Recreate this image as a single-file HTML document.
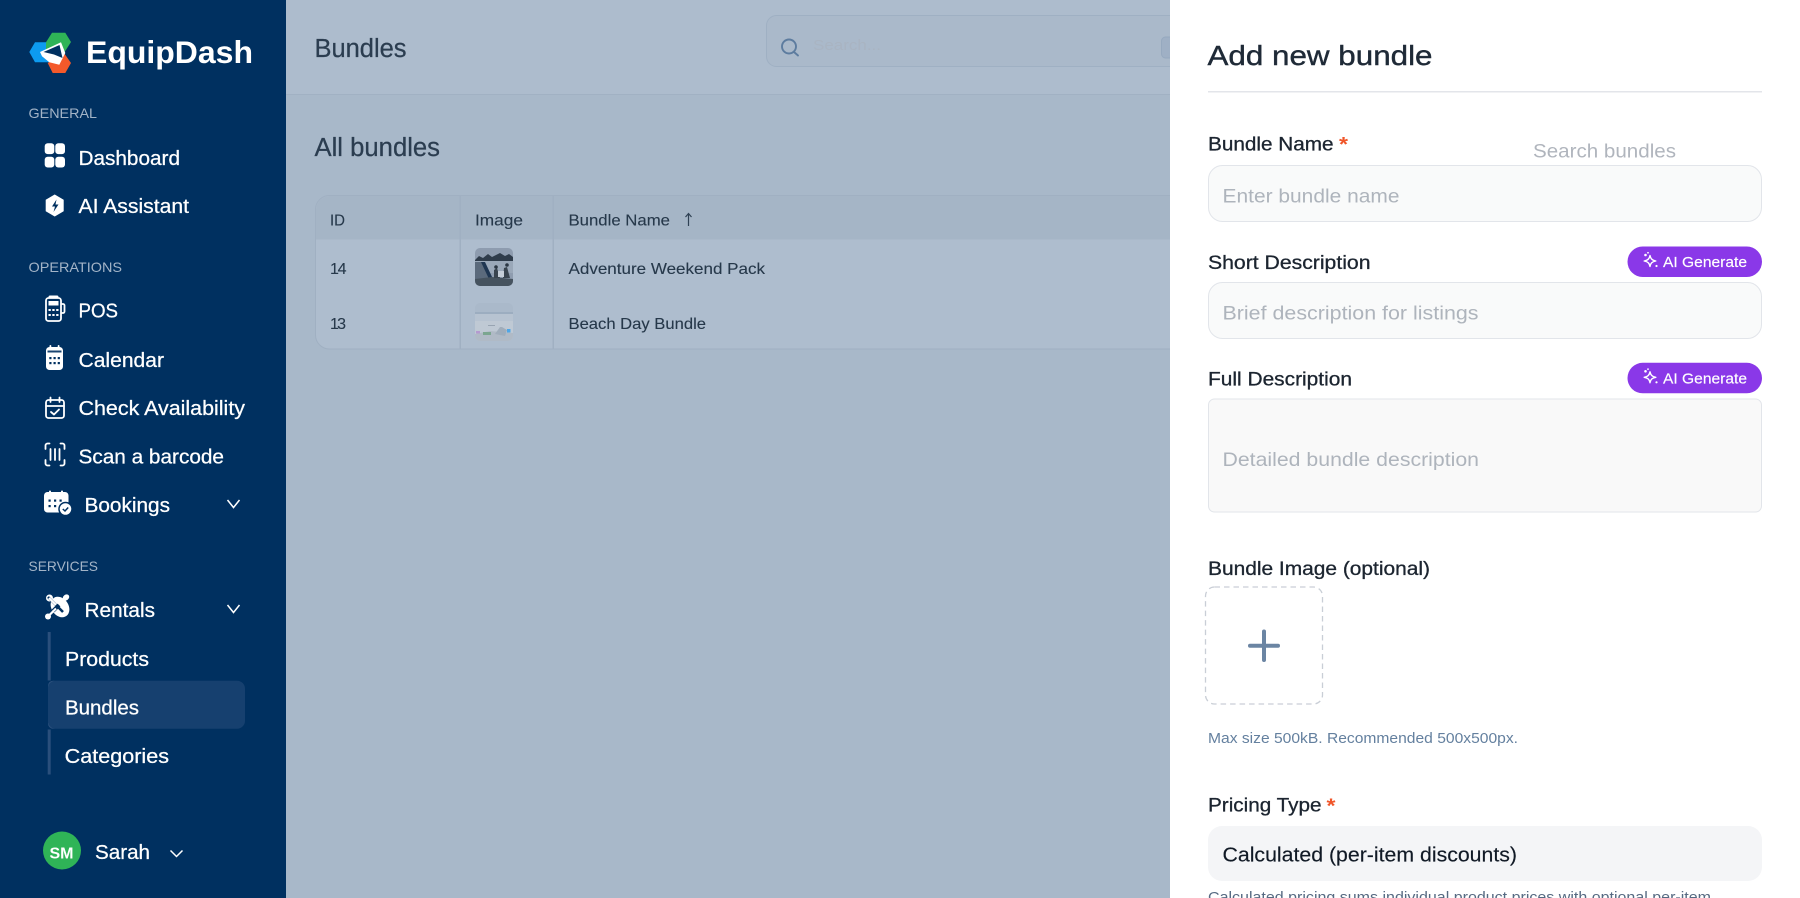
<!DOCTYPE html>
<html lang="en">
<head>
<meta charset="utf-8">
<title>EquipDash - Bundles</title>
<style>
html,body{margin:0;padding:0;width:1800px;height:898px;overflow:hidden;background:#fff}
svg{display:block}
text{font-family:"Liberation Sans",sans-serif;white-space:pre}
.nav{font-size:20px;fill:#fff;stroke:#fff;stroke-width:.25}
.sec{font-size:14px;fill:#a3b4c7}
.tb{font-size:16px;fill:#26384a;stroke:#26384a;stroke-width:.12}
.lab{font-size:19px;fill:#1c2530;stroke:#1c2530;stroke-width:.3}
.ph{font-size:19.5px;fill:#aeb4bc}
.ai{font-size:14.5px;fill:#fff;stroke:#fff;stroke-width:.15}
.req{font-size:20px;fill:#f0562a;font-weight:700}
</style>
</head>
<body>
<svg xmlns="http://www.w3.org/2000/svg" width="1800" height="898" viewBox="0 0 1800 898">
<defs>
<clipPath id="t1"><rect x="475" y="248" width="38" height="38" rx="5"/></clipPath>
<clipPath id="t2"><rect x="475" y="303" width="38" height="38" rx="5"/></clipPath>
</defs>

<!-- Main (dimmed) -->
<rect x="286" y="0" width="884" height="898" fill="#a8b8c9"/>
<rect x="286" y="0" width="884" height="94" fill="#adbccd"/>
<rect x="286" y="94" width="884" height="1" fill="#a1b1c3"/>
<text x="314.500" y="57" font-size="25.500" fill="#2b3d50" stroke="#2b3d50" stroke-width=".25" textLength="92" lengthAdjust="spacingAndGlyphs">Bundles</text>
<rect x="766.500" y="15.500" width="440" height="51" rx="10" fill="#aab9ca" stroke="#9fb0c3"/>
<circle cx="789" cy="46.500" r="7" fill="none" stroke="#5d7c9f" stroke-width="1.900"/>
<path d="M794 52L798 55.500" stroke="#5d7c9f" stroke-width="1.900" stroke-linecap="round"/>
<text x="813" y="50" font-size="15" fill="#a9b4c2" textLength="68" lengthAdjust="spacingAndGlyphs">Search...</text>
<rect x="1161.500" y="37" width="30" height="21" rx="4" fill="#9fb0c5" stroke="#96a9bf"/>
<text x="314.500" y="156" font-size="25.500" fill="#2b3d50" stroke="#2b3d50" stroke-width=".25" textLength="125.500" lengthAdjust="spacingAndGlyphs">All bundles</text>

<!-- Table -->
<rect x="315.500" y="195.500" width="900" height="153.500" rx="14" fill="#aebdce" stroke="#a0b0c2"/>
<path d="M316 239.500V209.500A14 14 0 0 1 330 196H1215V239.500Z" fill="#a5b5c6"/>
<rect x="459.500" y="196" width="1.500" height="153" fill="#a0b0c2"/>
<rect x="552.500" y="196" width="1.500" height="153" fill="#a0b0c2"/>
<text class="tb" x="330" y="225.700" textLength="15" lengthAdjust="spacingAndGlyphs">ID</text>
<text class="tb" x="475" y="225.700" textLength="48" lengthAdjust="spacingAndGlyphs">Image</text>
<text class="tb" x="568.500" y="225.700" textLength="101.500" lengthAdjust="spacingAndGlyphs">Bundle Name</text>
<path d="M688.500 226V214M685.500 217L688.500 213.500L691.500 217" fill="none" stroke="#2f4154" stroke-width="1.200"/>
<text class="tb" x="330" y="273.800" font-size="17" textLength="16.500" lengthAdjust="spacing">14</text>
<text class="tb" x="568.500" y="273.800" textLength="196.500" lengthAdjust="spacingAndGlyphs">Adventure Weekend Pack</text>
<text class="tb" x="330" y="328.800" font-size="17" textLength="16" lengthAdjust="spacing">13</text>
<text class="tb" x="568.500" y="328.800" textLength="137.500" lengthAdjust="spacingAndGlyphs">Beach Day Bundle</text>
<g clip-path="url(#t1)">
<rect x="475" y="248" width="38" height="38" fill="#8e9caf"/>
<rect x="475" y="259" width="38" height="14" fill="#9aa8b9"/>
<path d="M475 260L479 256L483 258L488 254L492 257L496 255L500 253L505 256L509 254L513 257V261H475Z" fill="#2f3c4b"/>
<path d="M475 262H482L491 281H475Z" fill="#5b6a7c"/>
<path d="M481 262L485 262L493 279L489 279Z" fill="#1f3652"/>
<path d="M475 279L492 277L513 279V286H475Z" fill="#46535f"/>
<path d="M494 270l3-2 3 10h-6zM504 268l3-1 3 11h-7z" fill="#39444f"/>
<path d="M498 271h6v6h-6z" fill="#c5ced8"/>
<circle cx="496" cy="267" r="1.800" fill="#2b3744"/><circle cx="507" cy="265" r="1.800" fill="#2b3744"/>
</g>
<g clip-path="url(#t2)">
<rect x="475" y="303" width="38" height="38" fill="#aab9ca"/>
<rect x="475" y="312" width="38" height="2" fill="#9cadc0"/>
<rect x="475" y="314" width="38" height="7" fill="#b7c3d1"/>
<rect x="475" y="321" width="38" height="20" fill="#bfc9d4"/>
<path d="M475 334L490 331L513 333V341H475Z" fill="#b0bac6"/>
<path d="M495 334l5-7 2 0 5 3-2 6z" fill="#a0adbb"/>
<rect x="483" y="332" width="8" height="3" fill="#7ba690"/>
<rect x="476" y="331" width="4" height="2.500" fill="#b49ad0"/>
<rect x="507" y="329" width="3.500" height="3.500" fill="#4fa6e6"/>
<rect x="488" y="325" width="7" height="1" fill="#98a4b2"/>
</g>

<!-- Sidebar -->
<rect x="0" y="0" width="286" height="898" fill="#003060"/>
<polygon points="29.300,52 35,42.300 62,42.300 62,62.300 35,62.300" fill="#0d9bf0"/>
<polygon points="52,32.700 65.300,32.700 71,42 64,53 46,50 46,42.300" fill="#2fb457"/>
<polygon points="64,53 71,63 65.300,73 52.700,73 47.700,63" fill="#f4592a"/>
<polygon points="40,52 61,42.300 65.300,53 59.300,64.700 49.300,62.300 42,56.300" fill="#fff"/>
<polygon points="43.500,52 59.500,45 62.500,58 54,54.500" fill="#003060"/>
<text x="86" y="63" font-size="31.500" font-weight="700" fill="#fff" textLength="167" lengthAdjust="spacingAndGlyphs">EquipDash</text>

<text class="sec" x="28.500" y="118" textLength="68.500" lengthAdjust="spacingAndGlyphs">GENERAL</text>
<g fill="#fff"><rect x="44.700" y="143.300" width="9.600" height="10.800" rx="3"/><rect x="55.300" y="143.300" width="9.700" height="10.800" rx="3"/><rect x="44.700" y="156.700" width="9.600" height="10.800" rx="3"/><rect x="55.300" y="156.700" width="9.700" height="10.800" rx="3"/></g>
<text class="nav" x="78.500" y="165" textLength="101.500" lengthAdjust="spacingAndGlyphs">Dashboard</text>
<polygon points="54.700,195 63.200,200 63.200,211 54.700,216 46.200,211 46.200,200" fill="#fff" stroke="#fff" stroke-width="1" stroke-linejoin="round"/>
<path d="M56.500 199.500L52 206.500H55L53.500 212L58.500 204.500H55.500Z" fill="#003060"/>
<text class="nav" x="78.500" y="213" textLength="110.500" lengthAdjust="spacingAndGlyphs">AI Assistant</text>

<text class="sec" x="28.500" y="272" textLength="93.500" lengthAdjust="spacingAndGlyphs">OPERATIONS</text>
<g fill="none" stroke="#fff" stroke-width="1.800" stroke-linejoin="round">
<rect x="46" y="298" width="15" height="23" rx="2.500"/>
<path d="M61 304h2a1.500 1.500 0 0 1 1.500 1.500v6a1.500 1.500 0 0 1-1.500 1.500h-2"/>
</g>
<rect x="48.500" y="295.500" width="10" height="3" rx="1.500" fill="#fff"/>
<rect x="48.500" y="301" width="10" height="4.500" fill="#fff"/>
<g fill="#fff"><rect x="48.500" y="309" width="2.300" height="2"/><rect x="52.300" y="309" width="2.300" height="2"/><rect x="56.200" y="309" width="2.300" height="2"/><rect x="48.500" y="314" width="2.300" height="2"/><rect x="52.300" y="314" width="2.300" height="2"/><rect x="56.200" y="314" width="2.300" height="2"/></g>
<text class="nav" x="78.500" y="317.700" textLength="39.500" lengthAdjust="spacingAndGlyphs">POS</text>

<rect x="46" y="347" width="17" height="23" rx="3.500" fill="#fff"/>
<rect x="47.500" y="350.500" width="14" height="2" fill="#003060" opacity=".9"/>
<rect x="49.500" y="345" width="1.800" height="5" rx=".9" fill="#fff"/><rect x="57.700" y="345" width="1.800" height="5" rx=".9" fill="#fff"/>
<g fill="#003060"><rect x="49.300" y="357" width="2.200" height="2.200"/><rect x="53.500" y="357" width="2.200" height="2.200"/><rect x="57.700" y="357" width="2.200" height="2.200"/><rect x="49.300" y="362" width="2.200" height="2.200"/><rect x="53.500" y="362" width="2.200" height="2.200"/><rect x="57.700" y="362" width="2.200" height="2.200"/></g>
<text class="nav" x="78.500" y="367" textLength="85.500" lengthAdjust="spacingAndGlyphs">Calendar</text>

<g fill="none" stroke="#fff" stroke-width="1.800" stroke-linecap="round" stroke-linejoin="round">
<rect x="46" y="400" width="18" height="18" rx="2.500"/>
<path d="M46 406H64M50.500 397.500V402M59.500 397.500V402"/>
<path d="M51 412L54 414.500L59 409.500"/>
</g>
<text class="nav" x="78.500" y="415" textLength="166.500" lengthAdjust="spacingAndGlyphs">Check Availability</text>

<g fill="none" stroke="#fff" stroke-width="1.800" stroke-linecap="round" stroke-linejoin="round">
<path d="M49.500 443.500H47.500A2 2 0 0 0 45.500 445.500V449M60.500 443.500H62.500A2 2 0 0 1 64.500 445.500V449M49.500 465.500H47.500A2 2 0 0 1 45.500 463.500V460M60.500 465.500H62.500A2 2 0 0 0 64.500 463.500V460"/>
<path d="M50.500 449V460M55 449V460M59.500 449V460"/>
</g>
<text class="nav" x="78.500" y="463.500" textLength="145.500" lengthAdjust="spacingAndGlyphs">Scan a barcode</text>

<rect x="44" y="492" width="24.500" height="20.500" rx="3.500" fill="#fff"/>
<rect x="49" y="490.500" width="2" height="4" rx="1" fill="#fff"/><rect x="61" y="490.500" width="2" height="4" rx="1" fill="#fff"/>
<g fill="#003060"><rect x="48.500" y="499.500" width="2.200" height="2.200"/><rect x="54" y="499.500" width="2.200" height="2.200"/><rect x="59.500" y="499.500" width="2.200" height="2.200"/><rect x="48.500" y="505" width="2.200" height="2.200"/><rect x="54" y="505" width="2.200" height="2.200"/></g>
<circle cx="65.500" cy="509" r="6.500" fill="#fff" stroke="#003060" stroke-width="1.500"/>
<path d="M62.800 509L65 511L68.200 507.500" fill="none" stroke="#003060" stroke-width="1.500"/>
<text class="nav" x="84.500" y="512" textLength="85.500" lengthAdjust="spacingAndGlyphs">Bookings</text>
<path d="M227.500 500L233.500 507.500L239.500 500" fill="none" stroke="#fff" stroke-width="1.500"/>

<text class="sec" x="28.500" y="571" textLength="69.500" lengthAdjust="spacingAndGlyphs">SERVICES</text>
<g fill="#fff">
<ellipse cx="60" cy="607" rx="8.500" ry="11" transform="rotate(-35 60 607)"/>
<ellipse cx="66" cy="597.500" rx="3.500" ry="2.800" transform="rotate(-40 66 597.500)"/>
<circle cx="49.500" cy="598" r="3.500"/>
<circle cx="48" cy="616.500" r="3"/>
</g>
<path d="M48 597L63 612" stroke="#003060" stroke-width="2.600"/>
<path d="M49 598L56 605" stroke="#fff" stroke-width="2.200"/>
<path d="M53 611L59 605" stroke="#003060" stroke-width="4"/>
<path d="M48 616.500L56 608.500" stroke="#fff" stroke-width="2.200"/>
<text class="nav" x="84.500" y="617" textLength="70.500" lengthAdjust="spacingAndGlyphs">Rentals</text>
<path d="M227.500 605L233.500 612.500L239.500 605" fill="none" stroke="#fff" stroke-width="1.500"/>

<rect x="47.700" y="632" width="3" height="48.500" fill="#2a4f7c"/>
<text class="nav" x="65" y="666" textLength="84" lengthAdjust="spacingAndGlyphs">Products</text>
<rect x="48" y="680.700" width="197" height="48" rx="8" fill="#16406f"/>
<path d="M56 680.700a8 8 0 0 0-8 8v32a8 8 0 0 0 8 8h-3a5 5 0 0 1-5-5v-38a5 5 0 0 1 5-5z" fill="#2a4f7c"/>
<text class="nav" x="65" y="714.700" textLength="74" lengthAdjust="spacingAndGlyphs">Bundles</text>
<rect x="47.700" y="729.500" width="3" height="45" fill="#2a4f7c"/>
<text class="nav" x="64.700" y="763" textLength="104.300" lengthAdjust="spacingAndGlyphs">Categories</text>

<circle cx="62" cy="850.500" r="19" fill="#2fb457"/>
<text x="49.500" y="858.500" font-size="16" font-weight="700" fill="#fff" textLength="24" lengthAdjust="spacingAndGlyphs">SM</text>
<text class="nav" x="95" y="859" textLength="55" lengthAdjust="spacingAndGlyphs">Sarah</text>
<path d="M170.500 850.500L176.500 856.500L182.500 850.500" fill="none" stroke="#fff" stroke-width="1.500"/>

<!-- Panel -->
<rect x="1170" y="0" width="630" height="898" fill="#fff"/>
<text x="1207.500" y="65" font-size="28" fill="#1f2a37" stroke="#1f2a37" stroke-width=".4" textLength="225" lengthAdjust="spacingAndGlyphs">Add new bundle</text>
<rect x="1208" y="91" width="554" height="1.500" fill="#e3e5ea"/>

<text class="lab" x="1208" y="150.700" textLength="125.500" lengthAdjust="spacingAndGlyphs">Bundle Name</text>
<text class="req" x="1339" y="151" textLength="9" lengthAdjust="spacingAndGlyphs">*</text>
<text x="1533" y="157.300" font-size="19.500" fill="#b0b5bd" textLength="143" lengthAdjust="spacingAndGlyphs">Search bundles</text>
<rect x="1208.500" y="165.500" width="553" height="56" rx="14" fill="#f9fafa" stroke="#e2e5ea"/>
<text class="ph" x="1222.500" y="202.700" textLength="177" lengthAdjust="spacingAndGlyphs">Enter bundle name</text>

<text class="lab" x="1208" y="269" textLength="162.500" lengthAdjust="spacingAndGlyphs">Short Description</text>
<rect x="1627.500" y="246.500" width="134.500" height="30.500" rx="15.250" fill="#8a38e8"/>
<g fill="none" stroke="#fff" stroke-width="1.400" stroke-linejoin="round">
<path d="M1650 255.500C1650.700 258.800 1652 260.200 1655.800 261C1652 261.800 1650.700 263 1650 266.500C1649.300 263 1648 261.800 1644.200 261C1648 260.200 1649.300 258.800 1650 255.500Z"/>
</g>
<circle cx="1645.500" cy="255" r="1.300" fill="#fff"/><circle cx="1648" cy="252.800" r=".9" fill="#fff"/><circle cx="1656.500" cy="266" r="1.100" fill="#fff"/>
<text class="ai" x="1663" y="267" textLength="84" lengthAdjust="spacingAndGlyphs">AI Generate</text>
<rect x="1208.500" y="282.500" width="553" height="56" rx="14" fill="#f9fafa" stroke="#e2e5ea"/>
<text class="ph" x="1222.500" y="319.300" textLength="256" lengthAdjust="spacingAndGlyphs">Brief description for listings</text>

<text class="lab" x="1208" y="385.500" textLength="144" lengthAdjust="spacingAndGlyphs">Full Description</text>
<rect x="1627.500" y="362.800" width="134.500" height="30.500" rx="15.250" fill="#8a38e8"/>
<g fill="none" stroke="#fff" stroke-width="1.400" stroke-linejoin="round">
<path d="M1650 371.800C1650.700 375.100 1652 376.500 1655.800 377.300C1652 378.100 1650.700 379.300 1650 382.800C1649.300 379.300 1648 378.100 1644.200 377.300C1648 376.500 1649.300 375.100 1650 371.800Z"/>
</g>
<circle cx="1645.500" cy="371.300" r="1.300" fill="#fff"/><circle cx="1648" cy="369.100" r=".9" fill="#fff"/><circle cx="1656.500" cy="382.300" r="1.100" fill="#fff"/>
<text class="ai" x="1663" y="383.400" textLength="84" lengthAdjust="spacingAndGlyphs">AI Generate</text>
<rect x="1208.500" y="399" width="553" height="113" rx="6" fill="#f9f9f9" stroke="#e2e5ea"/>
<text class="ph" x="1222.500" y="466" textLength="256.500" lengthAdjust="spacingAndGlyphs">Detailed bundle description</text>

<text class="lab" x="1208" y="575" textLength="222" lengthAdjust="spacingAndGlyphs">Bundle Image (optional)</text>
<rect x="1205.500" y="587" width="117" height="117" rx="9" fill="#fff" stroke="#c9ced6" stroke-width="1.300" stroke-dasharray="5.500 4"/>
<path d="M1250 645.700H1278M1264 631.500V660" stroke="#6b85a3" stroke-width="4" stroke-linecap="round"/>
<text x="1208" y="743" font-size="14.500" fill="#64809f" textLength="310" lengthAdjust="spacingAndGlyphs">Max size 500kB. Recommended 500x500px.</text>

<text class="lab" x="1208" y="811.700" textLength="113.500" lengthAdjust="spacingAndGlyphs">Pricing Type</text>
<text class="req" x="1326.500" y="812.500" textLength="9" lengthAdjust="spacingAndGlyphs">*</text>
<rect x="1208" y="826" width="554" height="55" rx="14" fill="#f4f5f7"/>
<text x="1222.500" y="861.700" font-size="20" fill="#111a26" stroke="#111a26" stroke-width=".15" textLength="294.500" lengthAdjust="spacingAndGlyphs">Calculated (per-item discounts)</text>
<text x="1208" y="902" font-size="15" fill="#566a82" textLength="503" lengthAdjust="spacingAndGlyphs">Calculated pricing sums individual product prices with optional per-item</text>
</svg>
</body>
</html>
